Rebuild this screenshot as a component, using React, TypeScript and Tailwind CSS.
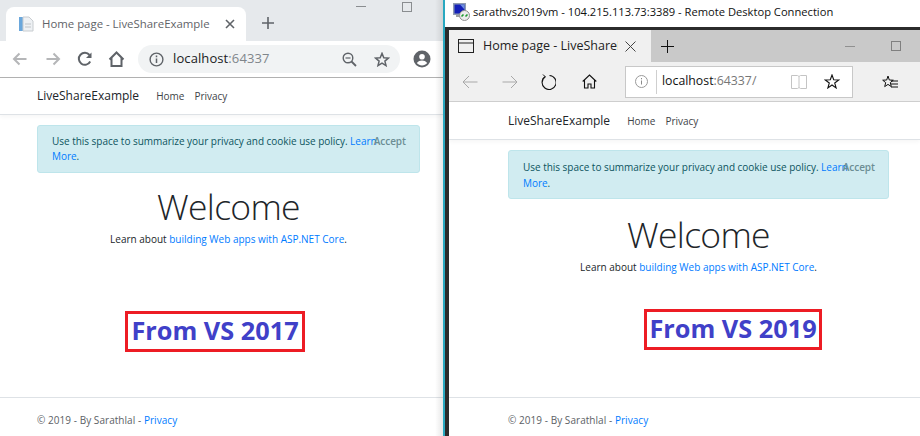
import React from "react";

const F = "font-['Open_Sans','Noto_Sans',sans-serif]";

const ChromeBack = ({ flip }: { flip?: boolean }) => (
  <svg width="16" height="14" viewBox="0 0 16 14" className={flip ? "rotate-180" : ""}>
    <path d="M14.5 7H2M7.5 1.5 2 7l5.5 5.5" fill="none" stroke="#b5b6b8" strokeWidth="2" />
  </svg>
);

const EdgeArrow = ({ flip }: { flip?: boolean }) => (
  <svg width="16" height="14" viewBox="0 0 16 14" className={flip ? "rotate-180" : ""}>
    <path d="M15.5 7H1M7 1 1 7l6 6" fill="none" stroke="#a8a8a8" strokeWidth="1" />
  </svg>
);

export default function App() {
  return (
    <div className={`w-[920px] h-[436px] overflow-hidden flex bg-white text-[#212529] ${F}`}>
      {/* LEFT: Chrome */}
      <div className="w-[443px] shrink-0 flex flex-col relative">
        <div className="h-[41px] bg-[#e6e9ec] flex items-end pl-[6px] shrink-0">
          <div className="w-[240px] h-[34px] bg-white rounded-t-[8px] flex items-center pl-[12px] pr-[11px]">
            <svg width="16" height="16" viewBox="0 0 16 16" className="shrink-0">
              <rect x="1" y="1" width="4" height="14" fill="#6aa7dc" />
              <path d="M5 1h6l4 4v10H5z" fill="#eef1f4" stroke="#c8ccd0" strokeWidth="1" />
              <path d="M7 8h6M7 11h6" stroke="#c0c4c8" />
            </svg>
            <span className="ml-[8px] text-[11.4px] text-[#5f6368] whitespace-nowrap">Home page - LiveShareExample</span>
            <svg width="10" height="10" viewBox="0 0 10 10" className="ml-auto shrink-0">
              <path d="M1 1l8 8M9 1 1 9" stroke="#5f6368" strokeWidth="1.6" />
            </svg>
          </div>
          <div className="w-[12px] h-[12px] ml-[16px] mb-[12px] relative shrink-0">
            <svg width="12" height="12" viewBox="0 0 12 12"><path d="M6 0v12M0 6h12" stroke="#5f6368" strokeWidth="1.6" /></svg>
          </div>
          <div className="ml-auto flex items-center h-full pb-[28px] pr-[31px] gap-[36px]">
            <div className="w-[10px] h-px bg-[#8a8d90]" />
            <div className="w-[10px] h-[10px] border border-[#8a8d90]" />
          </div>
        </div>
        <div className="h-[36px] shrink-0 flex items-center border-b border-[#b2b2b2] box-content">
          <div className="ml-[12px]"><ChromeBack /></div>
          <div className="ml-[17px]"><ChromeBack flip /></div>
          <svg width="16" height="16" viewBox="0 0 16 16" className="ml-[16px]">
            <path d="M13.2 10.5A6 6 0 1 1 12.5 4" fill="none" stroke="#5f6368" strokeWidth="2" />
            <path d="M14.5 1.5v5.5H9z" fill="#5f6368" />
          </svg>
          <svg width="17" height="16" viewBox="0 0 17 16" className="ml-[15px]">
            <path d="M1.5 8.5 8.5 1.5l7 7M3.5 7v8h10V7" fill="none" stroke="#5f6368" strokeWidth="2" />
          </svg>
          <div className="ml-[13px] w-[262px] h-[28px] rounded-full bg-[#f1f3f4] flex items-center pl-[11px] pr-[10px]">
            <svg width="15" height="15" viewBox="0 0 15 15" className="shrink-0">
              <circle cx="7.5" cy="7.5" r="6.4" fill="none" stroke="#5f6368" strokeWidth="1.4" />
              <path d="M7.5 6.5v4.5M7.5 3.6v1.7" stroke="#5f6368" strokeWidth="1.5" />
            </svg>
            <span className="ml-[9px] text-[13px] tracking-[0.1px] text-[#202124]">localhost<span className="text-[#80868b]">:64337</span></span>
            <svg width="15" height="15" viewBox="0 0 15 15" className="ml-auto shrink-0">
              <circle cx="6" cy="6" r="4.8" fill="none" stroke="#5f6368" strokeWidth="1.4" />
              <path d="M9.5 9.5 14 14" stroke="#5f6368" strokeWidth="1.8" />
              <path d="M3.5 6h5" stroke="#5f6368" strokeWidth="1.2" />
            </svg>
            <svg width="16" height="15" viewBox="0 0 16 15" className="ml-[17px] shrink-0">
              <path d="M8 1.4 9.8 5.7l4.6.4-3.5 3 1.1 4.5L8 11.2l-4 2.4 1.1-4.5-3.5-3 4.6-.4z" fill="none" stroke="#5f6368" strokeWidth="1.5" />
            </svg>
          </div>
          <svg width="18" height="18" viewBox="0 0 18 18" className="ml-[13px] shrink-0">
            <circle cx="9" cy="9" r="8.5" fill="#5f6368" />
            <circle cx="9" cy="6.8" r="2.8" fill="#fff" />
            <path d="M3.8 13c1.3-1.9 3.2-2.6 5.2-2.6s3.900.7 5.200 2.600c-1.300 1.600-3.100 2.400-5.200 2.400S5.100 14.600 3.800 13z" fill="#fff" />
          </svg>
        </div>
        <div className="h-[36px] shrink-0 border-b border-[#dee2e6] box-content shadow-[0_2px_4px_rgba(0,0,0,0.04)] flex items-center pl-[37px]">
          <span className="text-[12px] text-[#212529]">LiveShareExample</span>
          <span className="ml-[17px] text-[10px] text-[#3e4347]">Home</span>
          <span className="ml-[10px] text-[10px] text-[#3e4347]">Privacy</span>
        </div>
        <div className="mx-[37px] mt-[10px] w-[383px] h-[48px] rounded-[3px] bg-[#d1ecf1] border border-[#bee5eb] pl-[14px] pr-[13px] pt-[8px] text-[10px] tracking-[-0.03px] leading-[15px] text-[#0c5460] relative">
          Use this space to summarize your privacy and cookie use policy. <span className="text-[#007bff]">Learn More</span>.
          <span className="absolute right-[13px] top-[8px] text-[#6c8e94] font-semibold">Accept</span>
        </div>
        <div className="pl-[14px] text-center text-[35.5px] leading-[44px] font-light tracking-[-0.7px] text-[#212529] mt-[11px]">Welcome</div>
        <div className="pl-[14px] text-center text-[10px] leading-[15px] mt-[4px]">Learn about <span className="text-[#007bff]">building Web apps with ASP.NET Core</span>.</div>
        <div className="mt-[64px] ml-[125px] w-[180px] h-[41px] border-[3px] border-[#ed1c24] flex items-center justify-center pb-[2px] text-[25.3px] font-bold text-[#4040c8] whitespace-nowrap">From VS 2017</div>
        <div className="mt-[45px] border-t border-[#dee2e6] pl-[37px] pt-[15px] text-[10px] tracking-[0.05px] leading-[15px] text-[#5c6166]">© 2019 - By Sarathlal - <span className="text-[#007bff]">Privacy</span></div>
        <div className="absolute top-0 bottom-0 right-0 w-[8px] bg-gradient-to-r from-transparent to-[#00000018]" />
      </div>
      <div className="w-[2px] shrink-0 bg-[#29a8c0]" />

      {/* RIGHT: RDP + Edge */}
      <div className="flex-1 flex flex-col min-w-0">
        <div className="h-[27px] shrink-0 flex items-center pl-[8px] pb-[3px] bg-white">
          <svg width="17" height="18" viewBox="0 0 17 18" className="shrink-0">
            <rect x="0" y="0" width="13" height="12" fill="#8f9bb0" />
            <rect x="1.500" y="1.500" width="10" height="9" fill="#1420b8" />
            <path d="M7 1.500h4.500v5z" fill="#6f8fe0" />
            <rect x="3" y="12" width="7" height="2" fill="#a0a0a0" />
            <circle cx="11.500" cy="12.500" r="5" fill="#ececec" stroke="#8f8f8f" />
            <path d="M8.500 13.500l2-2M14.500 11.500l-2 2" stroke="#1e9a30" strokeWidth="1.600" />
          </svg>
          <span className="ml-[3px] text-[11.16px] text-[#111] whitespace-nowrap">sarathvs2019vm - 104.215.113.73:3389 - Remote Desktop Connection</span>
        </div>
        <div className="flex-1 border-t-[3px] border-l-[4px] border-[#2b2b2b] flex flex-col min-h-0">
          <div className="h-[32px] shrink-0 bg-[#c9c9c9] flex items-center">
            <div className="w-[202px] h-full bg-[#f0f0f0] flex items-center pl-[9px] shrink-0">
              <svg width="16" height="14" viewBox="0 0 16 14" className="shrink-0">
                <rect x="0.500" y="0.500" width="15" height="13" fill="none" stroke="#222" />
                <path d="M0.500 4h15" stroke="#222" />
              </svg>
              <span className="ml-[9px] w-[135px] overflow-hidden text-[12.5px] text-[#222] whitespace-nowrap">Home page - LiveShareExample</span>
              <svg width="11" height="11" viewBox="0 0 11 11" className="ml-[7px] shrink-0">
                <path d="M.5.500l10 10M10.500.500l-10 10" stroke="#444" />
              </svg>
            </div>
            <svg width="13" height="13" viewBox="0 0 13 13" className="ml-[10px] shrink-0"><path d="M6.500 0v13M0 6.500h13" stroke="#111" /></svg>
            <div className="ml-auto flex items-center pr-[19px] gap-[36px]">
              <div className="w-[10px] h-px bg-[#909090]" />
              <div className="w-[10px] h-[10px] border border-[#808080]" />
            </div>
          </div>
          <div className="h-[40px] shrink-0 bg-[#f0f0f0] border-b border-[#cfcfcf] flex items-center">
            <div className="ml-[13px]"><EdgeArrow /></div>
            <div className="ml-[24px]"><EdgeArrow flip /></div>
            <svg width="16" height="16" viewBox="0 0 16 16" className="ml-[22px]">
              <path d="M5 2.800A7 7 0 1 0 9.500 1.500" fill="none" stroke="#111" strokeWidth="1.100" />
              <path d="M3 0.500 5.500 3 2.500 5" fill="none" stroke="#111" strokeWidth="1" />
            </svg>
            <svg width="15" height="15" viewBox="0 0 15 15" className="ml-[26px]">
              <path d="M.7 7.500 7.500 1l6.800 6.500M2.500 6v8h3.500v-4h3v4h3.500V6" fill="none" stroke="#111" strokeWidth="1.100" />
            </svg>
            <div className="ml-[28px] w-[228px] h-[32px] bg-white border border-[#c8c8c8] flex items-center shrink-0">
              <svg width="13" height="13" viewBox="0 0 13 13" className="ml-[9px] shrink-0">
                <circle cx="6.500" cy="6.500" r="6" fill="none" stroke="#9a9a9a" />
                <path d="M6.500 5.500v4M6.500 3v1.300" stroke="#8a8a8a" />
              </svg>
              <div className="ml-[8px] w-px h-[24px] bg-[#cfcfcf]" />
              <span className="ml-[5px] text-[12.3px] text-[#111]">localhost<span className="text-[#777]">:64337/</span></span>
              <svg width="16" height="14" viewBox="0 0 16 14" className="ml-auto shrink-0">
                <path d="M.5.500h6l1.500 1 1.500-1h6v13h-6L8 12.500 6.500 13.500h-6zM8 1.500v11" fill="none" stroke="#c4c4c4" />
              </svg>
              <svg width="16" height="15" viewBox="0 0 16 15" className="ml-[17px] mr-[12px] shrink-0">
                <path d="M8 1 9.700 5.800l5 .2-4 3 1.400 4.900L8 11l-4.100 2.900L5.300 9l-4-3 5-.2z" fill="none" stroke="#111" strokeWidth="1.100" />
              </svg>
            </div>
            <svg width="16" height="15" viewBox="0 0 16 15" className="ml-[29px] mt-[2px] shrink-0">
              <path d="M6 1 7.300 5l4 .2-3 2.400 1 4L6 9.400l-3.300 2.200 1-4-3-2.400 4-.2z" fill="none" stroke="#111" />
              <path d="M9 6h7M9 9h7M9 12h7" stroke="#111" />
            </svg>
          </div>
          <div className="h-[38px] shrink-0 border-b border-[#dee2e6] shadow-[0_2px_4px_rgba(0,0,0,0.04)] flex items-center pl-[59px] pt-[1px]">
            <span className="text-[12px] text-[#212529]">LiveShareExample</span>
            <span className="ml-[17px] text-[10px] text-[#3e4347]">Home</span>
            <span className="ml-[10px] text-[10px] text-[#3e4347]">Privacy</span>
          </div>
          <div className="ml-[59px] mt-[10px] w-[381px] h-[49px] shrink-0 rounded-[3px] bg-[#d1ecf1] border border-[#bee5eb] pl-[14px] pr-[13px] pt-[8px] text-[10px] tracking-[-0.03px] leading-[16px] text-[#0c5460] relative">
            Use this space to summarize your privacy and cookie use policy. <span className="text-[#007bff]">Learn More</span>.
            <span className="absolute right-[13px] top-[8px] text-[#6c8e94] font-semibold">Accept</span>
          </div>
          <div className="ml-[59px] w-[381px] text-center text-[35.5px] leading-[44px] font-light tracking-[-0.7px] text-[#212529] mt-[13px]">Welcome</div>
          <div className="ml-[59px] w-[381px] text-center text-[10px] leading-[15px] mt-[4px]">Learn about <span className="text-[#007bff]">building Web apps with ASP.NET Core</span>.</div>
          <div className="mt-[34px] ml-[195px] w-[178px] h-[41px] border-[3px] border-[#ed1c24] flex items-center justify-center pb-[2px] text-[25.3px] font-bold text-[#4040c8] whitespace-nowrap shrink-0">From VS 2019</div>
          <div className="mt-[47px] border-t border-[#dee2e6] pl-[59px] pt-[15px] text-[10px] tracking-[0.05px] leading-[15px] text-[#5c6166]">© 2019 - By Sarathlal - <span className="text-[#007bff]">Privacy</span></div>
        </div>
      </div>
    </div>
  );
}
